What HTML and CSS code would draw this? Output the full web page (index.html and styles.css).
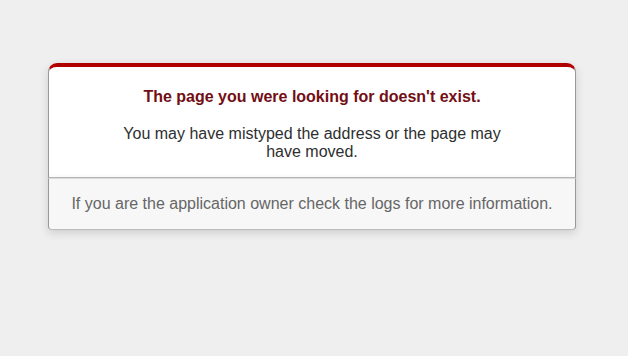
FILE: index.html
```html
<!DOCTYPE html>
<html>
<head>
<meta charset="utf-8">
<title>The page you were looking for doesn't exist (404)</title>
<link rel="stylesheet" href="styles.css">
</head>
<body class="rails-default-error-page">
<div class="dialog">
  <div class="dialog-box">
    <h1 class="title">The page you were looking for doesn't exist.</h1>
    <p class="message">You may have mistyped the address or the page may have moved.</p>
  </div>
  <p class="footer-note">If you are the application owner check the logs for more information.</p>
</div>
</body>
</html>
```

FILE: styles.css
```css
.rails-default-error-page {
  background-color: #EFEFEF;
  color: #2E2F30;
  text-align: center;
  font-family: "Liberation Sans", Arial, sans-serif;
  margin: 0;
  padding-right: 4px;
}
.dialog {
  width: 95%;
  max-width: 33em;
  margin: 63px auto 0;
}
.dialog-box {
  border: 1px solid #CCC;
  border-right-color: #999;
  border-left-color: #999;
  border-bottom-color: #BBB;
  border-top: #B00100 solid 4px;
  border-top-left-radius: 9px;
  border-top-right-radius: 9px;
  background-color: white;
  padding: 7px 12% 0;
  box-shadow: 0 3px 8px rgba(50, 50, 50, 0.17);
}
.title {
  font-size: 100%;
  color: #730E15;
  line-height: 1.5em;
  margin: 0.67em 0;
}
.message {
  margin: 1em 0;
}
.footer-note {
  margin: 0 0 1em;
  padding: 1em;
  background-color: #F7F7F7;
  border: 1px solid #CCC;
  border-right-color: #999;
  border-left-color: #999;
  border-bottom-color: #BBB;
  border-bottom-left-radius: 4px;
  border-bottom-right-radius: 4px;
  border-top-color: #DADADA;
  color: #666;
  box-shadow: 0 3px 8px rgba(50, 50, 50, 0.17);
}
```
